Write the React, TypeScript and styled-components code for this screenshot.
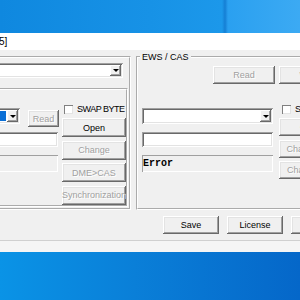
import React from "react"
import styled, { createGlobalStyle } from "styled-components"

const GlobalStyle = createGlobalStyle`
    html, body {
        margin: 0;
        padding: 0;
    }
    body {
        font-family: "Liberation Sans", Arial, sans-serif;
        font-size: 9px;
        color: #000;
    }
`

const Screen = styled.div`
    width: 300px;
    height: 300px;
    overflow: hidden;
    display: flex;
    flex-direction: column;
`

// desktop wallpaper strips above and below the dialog
const DesktopTop = styled.div`
    flex: none;
    height: 33px;
    background: linear-gradient(90deg, #0f88df 0%, #1792e6 50%, #1c98ea 74%, #157fd4 75%, #2aa0f0 76%, #3caaf3 100%);
`

const DesktopBottom = styled.div`
    flex: none;
    height: 48px;
    background: linear-gradient(90deg, #0a93e6 0%, #0a7fd8 45%, #0567c9 100%);
`

const Window = styled.div`
    flex: none;
    width: 400px;
    margin-left: -40px;
    background: #f0f0f0;
    display: flex;
    flex-direction: column;
`

const TitleBar = styled.div`
    height: 17px;
    background: #fff;
    padding-left: 39px;
    font-size: 10px;
    line-height: 17px;
`

const WindowEdge = styled.div`
    flex: none;
    height: 11px;
    border-top: 1px solid #d0d0d0;
    background: #f5f5f5;
`

const Body = styled.div`
    display: flex;
    gap: 5px;
    padding-top: 2px;
`

const Group = styled.fieldset<{ $width: number; $padLeft: number }>`
    flex: none;
    margin: 0;
    padding: 0 0 0 ${p => p.$padLeft}px;
    min-width: 0;
    width: ${p => p.$width}px;
    height: 158px;
    box-sizing: border-box;
    border: 2px groove #fff;
`

const Legend = styled.legend`
    padding: 0 2px;
    margin-left: -2px;
    font-size: 9px;
    line-height: 10px;
    height: 10px;
`

const InnerBox = styled.div`
    margin-top: 10px;
    width: 163px;
    height: 119px;
    box-sizing: border-box;
    border: 2px groove #fff;
    padding-left: 3px;
    display: flex;
    gap: 3px;
`

const Column = styled.div<{ $w: number; $pt: number }>`
    flex: none;
    width: ${p => p.$w}px;
    padding-top: ${p => p.$pt}px;
    display: flex;
    flex-direction: column;
`

const ButtonStack = styled.div<{ $w: number; $pt: number }>`
    flex: none;
    width: ${p => p.$w}px;
    padding-top: ${p => p.$pt}px;
    display: flex;
    flex-direction: column;
    gap: 3.5px;
`

const InlineRow = styled.div`
    display: flex;
    align-items: flex-start;
    gap: 8px;
`

const TopRow = styled.div`
    display: flex;
    gap: 4px;
    margin: 4px 0 0 71px;
`

const MainRow = styled.div`
    display: flex;
    gap: 6px;
    margin-top: 20px;
`

const Button = styled.button<{ $w: number; $h: number; $mt?: number }>`
    flex: none;
    width: ${p => p.$w}px;
    height: ${p => p.$h}px;
    margin-top: ${p => p.$mt ?? 0}px;
    padding: 0;
    border: none;
    box-sizing: border-box;
    background: #f0f0f0;
    box-shadow: inset -1px -1px 0 #696969, inset 1px 1px 0 #fff, inset -2px -2px 0 #a0a0a0, inset 2px 2px 0 #e3e3e3;
    font-family: "Liberation Sans", Arial, sans-serif;
    font-size: 9px;
    color: #000;
    white-space: nowrap;
    overflow: hidden;
    display: flex;
    align-items: center;
    justify-content: center;

    &:disabled {
        color: #a0a0a0;
        text-shadow: 1px 1px 0 #fff;
    }
`

const Sunken = styled.div<{ $w: number; $h: number; $mt?: number; $ml?: number }>`
    flex: none;
    width: ${p => p.$w}px;
    height: ${p => p.$h}px;
    margin-top: ${p => p.$mt ?? 0}px;
    margin-left: ${p => p.$ml ?? 0}px;
    box-sizing: border-box;
    background: #fff;
    box-shadow: inset 1px 1px 0 #a0a0a0, inset -1px -1px 0 #fff, inset 2px 2px 0 #696969, inset -2px -2px 0 #e3e3e3;
`

const ComboBox = styled(Sunken)`
    padding: 2px;
    display: flex;
    justify-content: flex-end;
`

const Selection = styled.div`
    flex: 1;
    margin: 1px;
    background: #0a6fd6;
`

const DropButton = styled.div`
    flex: none;
    width: 11px;
    background: #f0f0f0;
    box-shadow: inset -1px -1px 0 #696969, inset 1px 1px 0 #fff, inset -2px -2px 0 #a0a0a0;
    display: flex;
    align-items: center;
    justify-content: center;
`

const Arrow = styled.span`
    width: 0;
    height: 0;
    border-left: 3px solid transparent;
    border-right: 3px solid transparent;
    border-top: 3px solid #000;
`

const StaticBox = styled.div<{ $w: number; $mt: number }>`
    flex: none;
    width: ${p => p.$w}px;
    height: 17px;
    margin-top: ${p => p.$mt}px;
    box-sizing: border-box;
    box-shadow: inset 1px 1px 0 #a0a0a0, inset -1px -1px 0 #fff;
    padding-left: 1px;
    font-family: "Liberation Mono", "Courier New", monospace;
    font-weight: bold;
    font-size: 10px;
    line-height: 17px;
`

const CheckRow = styled.label<{ $pl: number }>`
    height: 10px;
    display: flex;
    align-items: center;
    gap: 4px;
    padding-left: ${p => p.$pl}px;
    white-space: nowrap;
    letter-spacing: -0.5px;
    line-height: 10px;
`

const CheckBox = styled.span`
    flex: none;
    width: 9px;
    height: 9px;
    box-sizing: border-box;
    background: #fff;
    box-shadow: inset 1px 1px 0 #808080, inset -1px -1px 0 #e3e3e3;
`

const Footer = styled.div`
    display: flex;
    gap: 8px;
    padding: 6px 0 6px 203px;
`

const Combo = ({ w, h, mt, ml, selected }: { w: number; h: number; mt?: number; ml?: number; selected?: boolean }) => (
    <ComboBox $w={w} $h={h} $mt={mt} $ml={ml}>
        {selected && <Selection />}
        <DropButton>
            <Arrow />
        </DropButton>
    </ComboBox>
)

const SwapByte = ({ pl }: { pl: number }) => (
    <CheckRow $pl={pl}>
        <CheckBox />
        SWAP BYTE
    </CheckRow>
)

export default function App() {
    return (
        <>
            <GlobalStyle />
            <Screen>
                <DesktopTop />
                <Window>
                    <TitleBar>5]</TitleBar>
                    <Body>
                        <Group $width={171} $padLeft={3}>
                            <Legend />
                            <Combo w={153} h={15} mt={1} ml={5} />
                            <InnerBox>
                                <Column $w={89} $pt={18}>
                                    <InlineRow>
                                        <Combo w={50} h={16} selected />
                                        <Button $w={31} $h={17} $mt={2} disabled>Read</Button>
                                    </InlineRow>
                                    <Sunken $w={88} $h={15} $mt={5} />
                                    <StaticBox $w={88} $mt={8} />
                                </Column>
                                <ButtonStack $w={64} $pt={14}>
                                    <SwapByte pl={2} />
                                    <Button $w={64} $h={19} $mt={0.5}>Open</Button>
                                    <Button $w={64} $h={19} disabled>Change</Button>
                                    <Button $w={64} $h={19} disabled>DME&gt;CAS</Button>
                                    <Button $w={64} $h={19} disabled>Synchronization</Button>
                                </ButtonStack>
                            </InnerBox>
                        </Group>
                        <Group $width={220} $padLeft={4}>
                            <Legend>EWS / CAS</Legend>
                            <TopRow>
                                <Button $w={62} $h={18} disabled>Read</Button>
                                <Button $w={62} $h={18} disabled>Write</Button>
                            </TopRow>
                            <MainRow>
                                <Column $w={131} $pt={4}>
                                    <Combo w={131} h={16} />
                                    <Sunken $w={131} $h={15} $mt={8} />
                                    <StaticBox $w={131} $mt={8}>Error</StaticBox>
                                </Column>
                                <ButtonStack $w={64} $pt={0}>
                                    <SwapByte pl={3} />
                                    <Button $w={64} $h={18} $mt={0.5}>Open</Button>
                                    <Button $w={64} $h={18} disabled>Change ISN</Button>
                                    <Button $w={64} $h={18} disabled>Change key</Button>
                                </ButtonStack>
                            </MainRow>
                        </Group>
                    </Body>
                    <Footer>
                        <Button $w={56} $h={18}>Save</Button>
                        <Button $w={56} $h={18}>License</Button>
                        <Button $w={56} $h={18}>Exit</Button>
                    </Footer>
                </Window>
                <WindowEdge />
                <DesktopBottom />
            </Screen>
        </>
    )
}
